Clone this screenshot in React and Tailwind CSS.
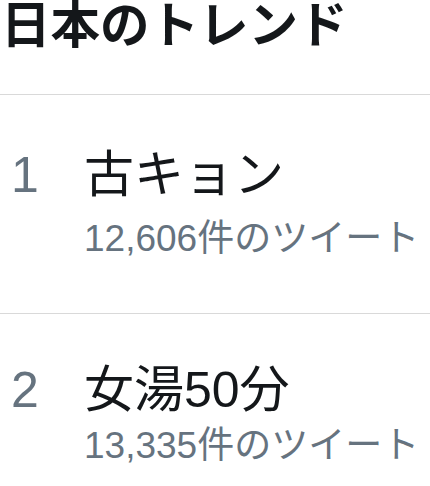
import React from "react";

const trends = [
  { rank: 1, name: "古キョン", count: "12,606件のツイート", pt: "pt-[55px]", gap: "mt-[20px]", pb: "pb-[56px]" },
  { rank: 2, name: "女湯50分", count: "13,335件のツイート", pt: "pt-[51px]", gap: "mt-[12px]", pb: "pb-[40px]" },
];

function TrendRow({ rank, name, count, pt, gap, pb }) {
  return (
    <div className={`flex border-t border-[#d9d9d9] ${pt} ${pb}`}>
      <div className="w-[84px] shrink-0 pl-[11px] text-[50px] leading-[50px] text-[#66737f]">{rank}</div>
      <div className="flex flex-col">
        <div className="text-[50px] leading-[50px] text-[#14171a]">{name}</div>
        <div className={`${gap} text-[37px] leading-[37px] text-[#66737f]`}>{count}</div>
      </div>
    </div>
  );
}

export default function App() {
  return (
    <div
      className="w-[430px] h-[486px] overflow-hidden bg-white"
      style={{ fontFamily: '"Liberation Sans", "Noto Sans CJK JP", sans-serif' }}
    >
      <div className="h-[94px]">
        <h1 className="pl-[1px] text-[49.5px] leading-[52px] font-bold text-[#14171a]">日本のトレンド</h1>
      </div>
      {trends.map((t) => (
        <TrendRow key={t.rank} {...t} />
      ))}
    </div>
  );
}
